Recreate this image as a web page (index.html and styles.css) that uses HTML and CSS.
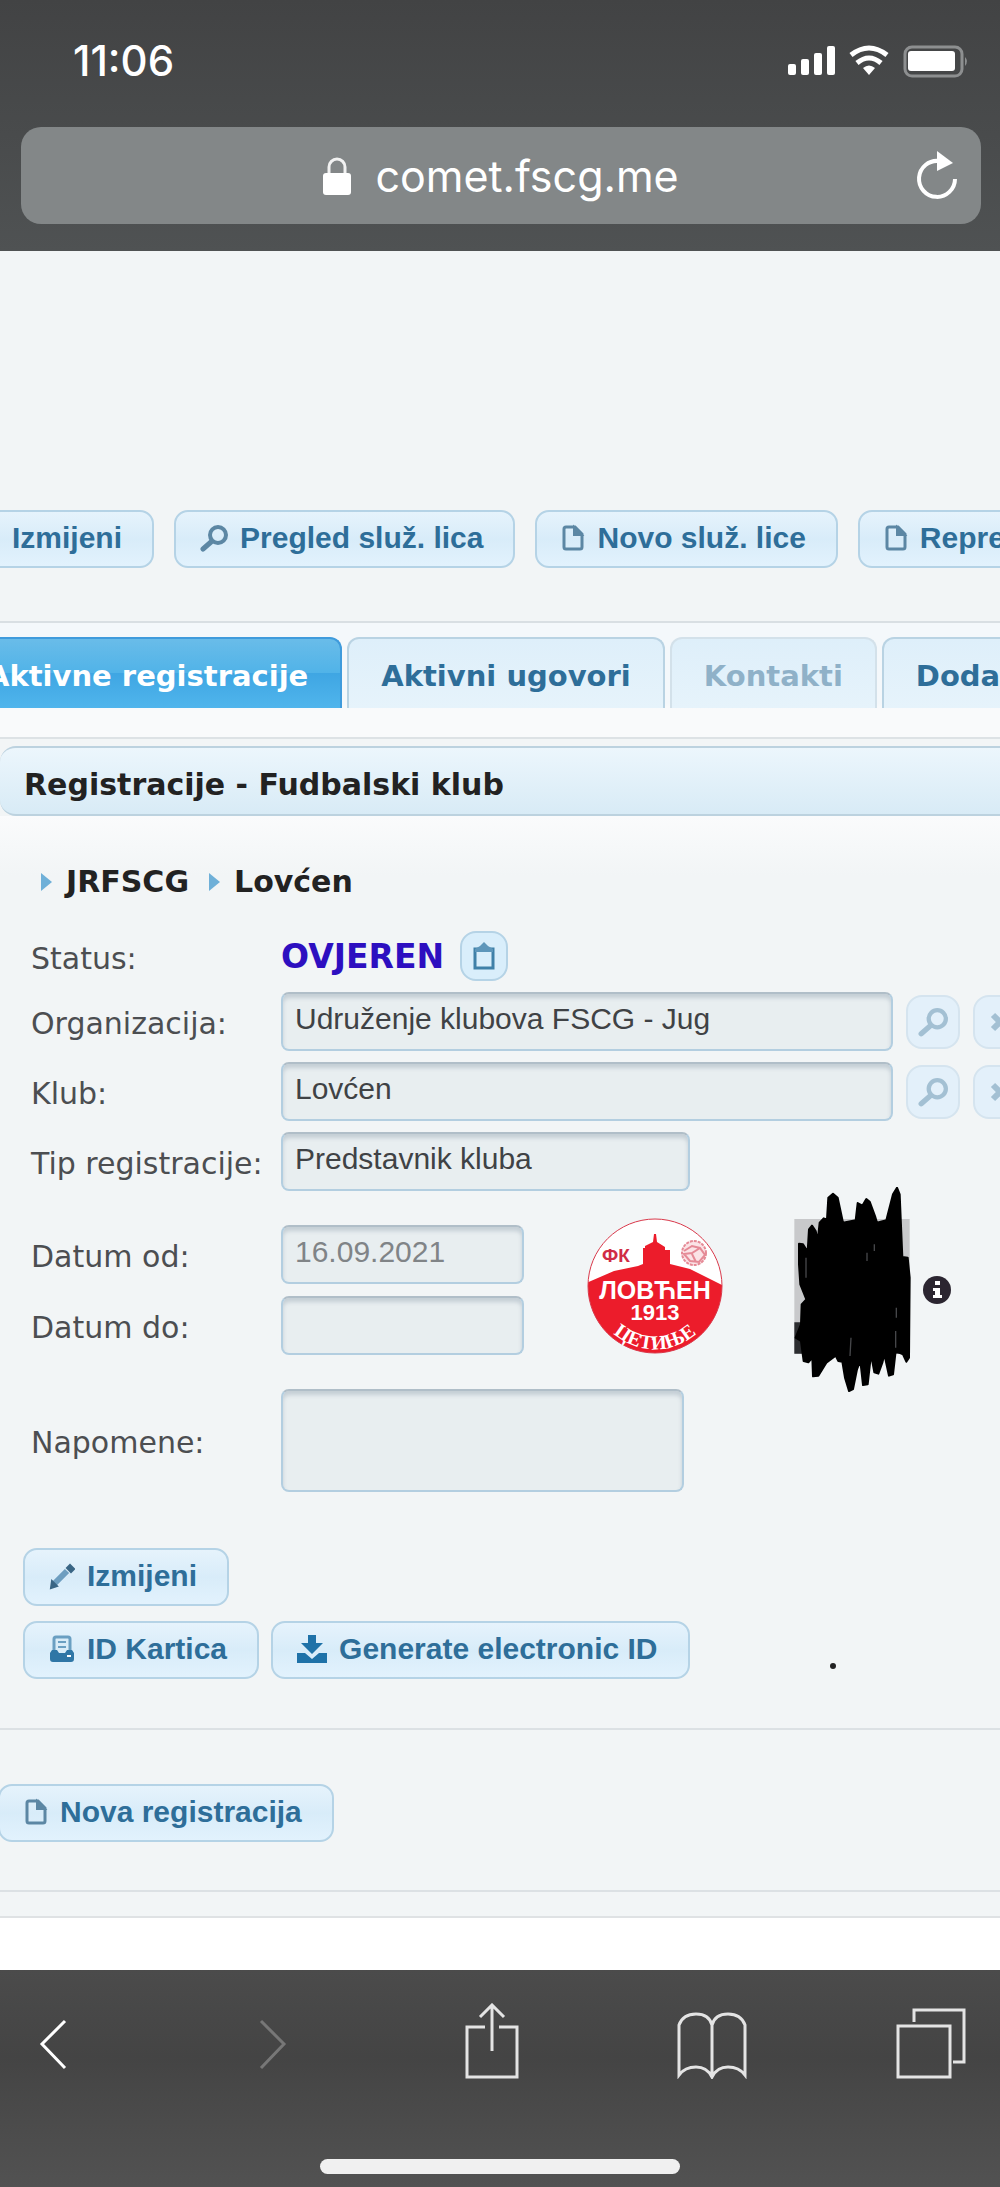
FILE: index.html
```
<!DOCTYPE html>
<html lang="sr-Latn-ME">
<head>
    <meta charset="UTF-8">
    <meta name="viewport" content="width=device-width, initial-scale=1.0">
    <title>COMET - Registracije</title>
    <link rel="stylesheet" href="styles.css">
</head>
<body>
    <!-- Shared icons -->
    <svg class="sprite" aria-hidden="true">
        <symbol id="icon-search" viewBox="0 0 28 28">
            <circle cx="18" cy="11" r="8" fill="none" stroke="currentColor" stroke-width="4"/>
            <path d="M11 18L3 25" stroke="currentColor" stroke-width="5" stroke-linecap="round"/>
        </symbol>
        <symbol id="icon-page" viewBox="0 0 24 28">
            <path d="M5 3h9l7 7v13a2 2 0 0 1-2 2H5a2 2 0 0 1-2-2V5a2 2 0 0 1 2-2z" fill="none" stroke="currentColor" stroke-width="3"/>
            <path d="M13 3v8h8z" fill="currentColor" stroke="currentColor" stroke-width="2"/>
        </symbol>
        <symbol id="icon-close" viewBox="0 0 20 20">
            <path d="M3 3l14 14M17 3L3 17" stroke="currentColor" stroke-width="6"/>
        </symbol>
    </svg>

    <header class="browser-top">
        <div class="status-bar">
            <span class="time">11:06</span>
            <svg class="status-icons" width="182" height="36" viewBox="0 0 182 36">
                <g fill="#fff">
                    <rect x="1" y="22" width="8" height="11" rx="2"/>
                    <rect x="14" y="17" width="8" height="16" rx="2"/>
                    <rect x="27" y="11" width="8" height="22" rx="2"/>
                    <rect x="40" y="4" width="8" height="29" rx="2"/>
                    <path d="M82 33l-6-7q6-5 12 0z"/>
                    <rect x="121" y="9" width="47" height="20" rx="3"/>
                </g>
                <g fill="none" stroke="#fff" stroke-width="5">
                    <path d="M64 13q18-14 36 0"/>
                    <path d="M70 21q12-10 24 0"/>
                </g>
                <rect x="118" y="5" width="57" height="29" rx="7" fill="none" stroke="#8d8f90" stroke-width="3"/>
                <path d="M178 15q4 4 0 9z" fill="#8d8f90"/>
            </svg>
        </div>
        <div class="url-bar">
            <span class="url">
                <svg width="28" height="38" viewBox="0 0 28 38">
                    <path d="M6 19v-9a8 8 0 0 1 16 0v9" fill="none" stroke="#f2f2f2" stroke-width="3"/>
                    <rect y="16" width="28" height="22" rx="3" fill="#fff"/>
                </svg>
                comet.fscg.me
            </span>
            <button class="reload" aria-label="Reload">
                <svg width="44" height="50" viewBox="0 0 44 50">
                    <path d="M24 10A18 18 0 1 0 40 28" fill="none" stroke="#fff" stroke-width="4"/>
                    <path d="M22 0l16 12-16 8z" fill="#fff"/>
                </svg>
            </button>
        </div>
    </header>

    <main>
        <div class="toolbar">
            <button class="btn">Izmijeni</button>
            <button class="btn"><svg width="28" height="28"><use href="#icon-search"/></svg>Pregled služ. lica</button>
            <button class="btn"><svg width="24" height="28"><use href="#icon-page"/></svg>Novo služ. lice</button>
            <button class="btn"><svg width="24" height="28"><use href="#icon-page"/></svg>Reprezentacija</button>
        </div>

        <nav class="tabs">
            <a href="#registracije" class="tab active">Aktivne registracije</a>
            <a href="#ugovori" class="tab">Aktivni ugovori</a>
            <a class="tab disabled" aria-disabled="true">Kontakti</a>
            <a href="#dodatno" class="tab">Dodatno</a>
        </nav>

        <section class="panel" id="registracije">
            <h2>Registracije - Fudbalski klub</h2>

            <div class="panel-body">
                <div class="breadcrumbs">
                    <span>JRFSCG</span>
                    <span>Lovćen</span>
                </div>

                <form class="form">
                    <div class="row status-row">
                        <span class="label">Status:</span>
                        <strong class="status">OVJEREN</strong>
                        <button type="button" class="icon-btn small" aria-label="Istorija">
                            <svg width="26" height="32" viewBox="0 0 26 32">
                                <path d="M4 9h18v19H4z" fill="none" stroke="#3f80a8" stroke-width="3"/>
                                <path d="M4 9l5-3 4-4 4 4 5 3v3H4z" fill="#5d96ba"/>
                            </svg>
                        </button>
                    </div>
                    <div class="row">
                        <label for="org">Organizacija:</label>
                        <input id="org" class="wide" type="text" value="Udruženje klubova FSCG - Jug" readonly>
                        <button type="button" class="icon-btn" aria-label="Traži organizaciju" disabled><svg width="30" height="30"><use href="#icon-search"/></svg></button>
                        <button type="button" class="icon-btn" aria-label="Obriši organizaciju" disabled><svg width="20" height="20"><use href="#icon-close"/></svg></button>
                    </div>
                    <div class="row">
                        <label for="klub">Klub:</label>
                        <input id="klub" class="wide" type="text" value="Lovćen" readonly>
                        <button type="button" class="icon-btn" aria-label="Traži klub" disabled><svg width="30" height="30"><use href="#icon-search"/></svg></button>
                        <button type="button" class="icon-btn" aria-label="Obriši klub" disabled><svg width="20" height="20"><use href="#icon-close"/></svg></button>
                    </div>
                    <div class="row">
                        <label for="tip">Tip registracije:</label>
                        <input id="tip" class="medium" type="text" value="Predstavnik kluba" readonly>
                    </div>

                    <div class="dates">
                        <div class="date-fields">
                            <div class="row">
                                <label for="od">Datum od:</label>
                                <input id="od" class="date" type="text" value="16.09.2021" readonly>
                            </div>
                            <div class="row">
                                <label for="do">Datum do:</label>
                                <input id="do" class="date" type="text" readonly>
                            </div>
                        </div>

                        <svg class="crest" width="138" height="138" viewBox="0 0 138 138" role="img" aria-label="FK Lovćen">
                            <defs>
                                <clipPath id="crest-clip"><circle cx="69" cy="69" r="67"/></clipPath>
                                <path id="crest-arc" d="M8 85A63 63 0 0 0 130 85"/>
                            </defs>
                            <circle cx="69" cy="69" r="67" fill="#fff"/>
                            <path clip-path="url(#crest-clip)" fill="#ec1c2b" d="M0 66l28-12 24-5 5-2V31h2v-2l8-4 1-8h2l1 8 8 5v3h5v14l20 5 34 17v74H0z"/>
                            <circle cx="69" cy="69" r="67" fill="none" stroke="#d9384a" stroke-width="1"/>
                            <g fill="none" stroke="#e58a96">
                                <circle cx="108" cy="36" r="12" fill="#fbe3e6" stroke-width="2" stroke-dasharray="3 1"/>
                                <path d="M98 34l8-5 8 2 5 7-6 7-9-1-6-7 8-1 8-5M106 37l4 8" stroke-width="2"/>
                            </g>
                            <text class="crest-fk" x="16" y="45">ФК</text>
                            <text class="crest-name" x="69" y="82">ЛОВЋЕН</text>
                            <text class="crest-year" x="69" y="103">1913</text>
                            <text class="crest-city"><textPath href="#crest-arc" startOffset="50%">ЦЕТИЊЕ</textPath></text>
                        </svg>

                        <!-- Photo, scribbled over -->
                        <svg class="photo" width="120" height="206" viewBox="700 18 360 618" role="img" aria-label="Fotografija">
                            <path d="M704 114h346v404H704z" fill="#c8c9cb"/>
                            <path d="M704 424h60v94h-60zM980 440h70v78h-70z" fill="#2c2d30"/>
                            <path d="M718 188L730 190L744 212L748 145L757 134L768 150L774 180L780 125L792 112L802 115L806 50L820 38L834 50L850 125L888 118L894 66L908 74L920 54L930 62L946 105L952 125L980 118L1000 40L1012 20L1020 40L1028 228L1044 230L1050 290L1048 530L1040 542L1030 520L1008 510L1000 580L988 584L974 520L968 545L956 578L944 574L934 520L924 610L910 612L902 540L892 565L880 624L868 630L856 590L848 542L836 540L828 524L800 545L776 584L760 586L758 530L746 544L732 540L724 480L708 470L724 430L726 370L740 355L722 310L718 250Z" stroke="#000" stroke-width="6" stroke-linejoin="round"/>
                            <path d="M739 230v60M874 470l-3 55M1010 380v30M1008 450v50M922 215v25M944 190v20" stroke="#46474a" stroke-width="4"/>
                        </svg>

                        <svg class="info" width="30" height="30" viewBox="0 0 30 30" role="img" aria-label="Info">
                            <circle cx="15" cy="15" r="14" fill="#2b2530"/>
                            <path d="M13 6h5v4h-5zM11 13h7v7h2v3h-9v-3h2v-4h-2z" fill="#fff"/>
                        </svg>
                    </div>

                    <div class="row">
                        <label for="napomene">Napomene:</label>
                        <textarea id="napomene" readonly></textarea>
                    </div>
                </form>

                <div class="actions">
                    <div class="btn-group">
                        <button class="btn">
                            <svg width="26" height="28" viewBox="0 0 26 28">
                                <path d="M5 22L18 9" stroke="#6d9ec0" stroke-width="6"/>
                                <path d="M2 26l1-7 5 5zM18 6l3-3 4 4-3 3z" fill="#3a6685" stroke="#3a6685" stroke-width="2"/>
                            </svg>Izmijeni
                        </button>
                    </div>
                    <div class="btn-group">
                        <button class="btn">
                            <svg width="26" height="28" viewBox="0 0 26 28">
                                <path d="M5 16V4q0-2 2-2h12q2 0 2 2v12" fill="#d9ecf8" stroke="#6a9fc2" stroke-width="3"/>
                                <path d="M9 7h8M9 12h8" stroke="#6a9fc2" stroke-width="2"/>
                                <path d="M3 15h5l2 3h6l2-3h5l2 3v6q0 3-3 3H4q-3 0-3-3v-6z" fill="#2f76a6"/>
                                <path d="M18 21h4" stroke="#fff" stroke-width="2"/>
                            </svg>ID Kartica
                        </button>
                        <button class="btn">
                            <svg width="30" height="28" viewBox="0 0 30 28">
                                <path d="M11 0h8v8h7L15 19 4 8h7z" fill="#1f72a8"/>
                                <path d="M0 18h8l7 6 7-6h8v10H0z" fill="#1f72a8"/>
                            </svg>Generate electronic ID
                        </button>
                        <span class="dot"></span>
                    </div>
                </div>
            </div>

            <div class="panel-footer">
                <button class="btn"><svg width="24" height="28"><use href="#icon-page"/></svg>Nova registracija</button>
            </div>
        </section>
    </main>

    <footer class="browser-bottom">
        <div class="browser-nav">
            <button aria-label="Back">
                <svg width="28" height="76" viewBox="0 0 28 76"><path d="M26 18L3 41l23 24" stroke="#fff" stroke-width="3"/></svg>
            </button>
            <button aria-label="Forward">
                <svg width="28" height="76" viewBox="0 0 28 76"><path d="M2 18l23 23L2 65" stroke="#777" stroke-width="3"/></svg>
            </button>
            <button aria-label="Share">
                <svg width="54" height="76" viewBox="0 0 54 76"><path d="M20 24H2v50h50V24H34M27 2v46M15 14L27 2l12 12" stroke="#e4e4e4" stroke-width="3"/></svg>
            </button>
            <button aria-label="Bookmarks">
                <svg width="70" height="76" viewBox="0 0 70 76"><path d="M35 22Q32 11 19 11T2 22v50q6-8 17-8t16 10q5-10 16-10t17 8V22Q64 11 51 11T35 22zv52" stroke="#e4e4e4" stroke-width="3"/></svg>
            </button>
            <button aria-label="Tabs">
                <svg width="70" height="76" viewBox="0 0 70 76"><path d="M2 23h52v51H2zM18 19V7h50v52H57" stroke="#e4e4e4" stroke-width="3"/></svg>
            </button>
        </div>
        <div class="home-bar"></div>
    </footer>
</body>
</html>
```
FILE: styles.css
```
* {
    margin: 0;
    padding: 0;
    box-sizing: border-box;
}

body {
    font-family: "DejaVu Sans", Verdana, sans-serif;
    font-size: 30px;
    color: #4c4e51;
    background: #fff;
    min-height: 100vh;
    display: flex;
    flex-direction: column;
    overflow-x: hidden;
}

button {
    background: none;
    border: none;
}

svg {
    display: block;
    flex: none;
}

.sprite {
    display: none;
}

/* Browser top */
.browser-top {
    padding: 36px 19px 27px 21px;
    background: linear-gradient(#424344, #4f5253);
    color: #fff;
    font-family: Inter, sans-serif;
}

.status-bar {
    display: flex;
    align-items: center;
    justify-content: space-between;
    height: 48px;
    margin-bottom: 43px;
    padding: 0 12px 0 52px;
}

.time {
    font-size: 42px;
    font-weight: 500;
}

.url-bar {
    display: grid;
    grid-template-columns: 1fr auto 1fr;
    align-items: center;
    height: 97px;
    padding: 0 22px;
    border-radius: 20px;
    background: #838788;
}

.url {
    display: flex;
    align-items: center;
    grid-column: 2;
    gap: 24px;
    font-size: 43px;
}

.reload {
    justify-self: end;
}

/* Page */
main {
    background: #f2f5f6;
    overflow: hidden;
}

.toolbar {
    display: flex;
    gap: 20px;
    padding: 259px 0 53px;
    margin-left: -14px;
}

.btn {
    display: inline-flex;
    align-items: center;
    gap: 12px;
    flex: none;
    height: 58px;
    padding: 0 30px 2px 24px;
    border: 2px solid #b5d3e6;
    border-radius: 14px;
    background: linear-gradient(#e6f3fc, #d8ecf9 50%, #e2f2fd);
    color: #2e6e99;
    font-family: "Liberation Sans", Arial, sans-serif;
    font-size: 30px;
    font-weight: bold;
    white-space: nowrap;
}

.btn svg {
    color: #5c87a4;
}

.tabs {
    display: flex;
    gap: 5px;
    padding: 14px 0 29px;
    border-top: 2px solid #d9dfe3;
    border-bottom: 2px solid #dde2e5;
    background: linear-gradient(#f4f8fb 80px, #f9fafb 86px);
}

.tab {
    flex: none;
    height: 71px;
    padding: 0 32px;
    border: 2px solid #b9d3e3;
    border-bottom: none;
    border-radius: 12px 12px 0 0;
    background: linear-gradient(#deeffa, #e6f3fb);
    color: #2e6e99;
    font-size: 29px;
    font-weight: bold;
    line-height: 74px;
    text-decoration: none;
    white-space: nowrap;
}

.tab.active {
    margin-left: -47px;
    border-color: #3f9bdc;
    background: linear-gradient(#69bce9, #50b3e8 50%, #3fa6e3 50%, #50b5ec);
    color: #fff;
}

.tab.disabled {
    border-color: #d3e1ea;
    color: #8fb1c8;
}

.panel {
    padding-top: 7px;
}

.panel h2 {
    height: 70px;
    padding-left: 24px;
    border: 2px solid #bcd2df;
    border-width: 2px 0;
    border-radius: 16px 0 0 16px;
    background: linear-gradient(#ecf6fc, #d8ebf6);
    color: #222;
    font-size: 30px;
    line-height: 74px;
}

.panel-body {
    padding: 46px 0 49px;
    background: linear-gradient(#fafbfc, #f2f5f6 60px);
    border-bottom: 2px solid #dce1e4;
}

.breadcrumbs {
    display: flex;
    gap: 20px;
    padding-left: 41px;
    color: #222;
    font-weight: bold;
    line-height: 40px;
}

.breadcrumbs span {
    display: flex;
    align-items: center;
    gap: 14px;
}

.breadcrumbs span::before {
    content: "";
    border: 9px solid transparent;
    border-left: 11px solid #6fb0d8;
    border-right: none;
}

/* Form */
.form {
    display: flex;
    flex-direction: column;
    gap: 11px;
    padding: 29px 0 56px 31px;
}

.row {
    display: flex;
    align-items: center;
}

.row label,
.label {
    flex: none;
    width: 250px;
    padding-top: 4px;
    white-space: nowrap;
}

.status {
    margin-right: 16px;
    color: #2d0fc0;
    font-size: 33px;
}

input,
textarea {
    flex: none;
    height: 59px;
    padding: 0 12px 6px;
    border: 2px solid #b3cee0;
    border-top-color: #b0bec8;
    border-radius: 8px;
    background: #e8eef0;
    box-shadow: inset 0 4px 4px #c4ced5;
    color: #3f4245;
    font-family: "Liberation Sans", Arial, sans-serif;
    font-size: 30px;
}

.wide {
    width: 612px;
}

.medium {
    width: 409px;
}

.date {
    width: 243px;
    color: #808487;
}

textarea {
    width: 403px;
    height: 103px;
    resize: none;
}

.icon-btn {
    display: flex;
    align-items: center;
    justify-content: center;
    flex: none;
    width: 54px;
    height: 54px;
    margin-left: 13px;
    border: 2px solid #d5e4ef;
    border-radius: 16px;
    background: #e3f0fa;
    color: #a3c0d3;
}

.icon-btn.small {
    width: 48px;
    height: 50px;
    margin-left: 0;
    border-color: #b5d3e6;
    background: #d9eefb;
}

.dates {
    display: flex;
    align-items: center;
    margin: 23px 0;
}

.date-fields {
    display: flex;
    flex-direction: column;
    gap: 12px;
}

.crest {
    margin: -8px 0 0 62px;
}

.crest text {
    fill: #fff;
    font-family: "Liberation Sans", Arial, sans-serif;
    font-weight: bold;
    text-anchor: middle;
}

.crest .crest-fk {
    fill: #d02c45;
    font-size: 19px;
    text-anchor: start;
}

.crest .crest-name {
    font-size: 25px;
}

.crest .crest-year {
    font-size: 22px;
}

.crest .crest-city {
    font-family: "Liberation Serif", serif;
    font-size: 20px;
}

/* The scribble runs past the rows above and below */
.photo {
    margin: -38px 0 -38px 69px;
}

.info {
    margin-left: 9px;
}

/* Buttons under the form */
.actions {
    display: flex;
    flex-direction: column;
    gap: 15px;
    padding-left: 23px;
}

.btn-group {
    display: flex;
    align-items: center;
    gap: 12px;
}

.dot {
    width: 6px;
    height: 6px;
    margin: 32px 0 0 128px;
    border-radius: 50%;
    background: #222;
}

.panel-footer {
    padding: 54px 0 48px;
    border-bottom: 2px solid #dce1e4;
}

.panel-footer .btn {
    margin-left: -2px;
}

main::after {
    content: "";
    display: block;
    height: 24px;
    border-bottom: 2px solid #dfe2e4;
}

/* Browser bottom */
.browser-bottom {
    margin-top: auto;
    padding: 33px 0 13px;
    background: linear-gradient(#4b4b4b, #444 40%, #525252);
}

.browser-nav {
    display: flex;
    justify-content: space-between;
    padding: 0 34px 0 18px;
    margin-bottom: 80px;
}

.browser-nav button {
    display: flex;
    justify-content: center;
    width: 70px;
}

.browser-nav path {
    fill: none;
}

.home-bar {
    width: 36%;
    height: 15px;
    margin: 0 auto;
    border-radius: 8px;
    background: #f0f0f0;
}
```
